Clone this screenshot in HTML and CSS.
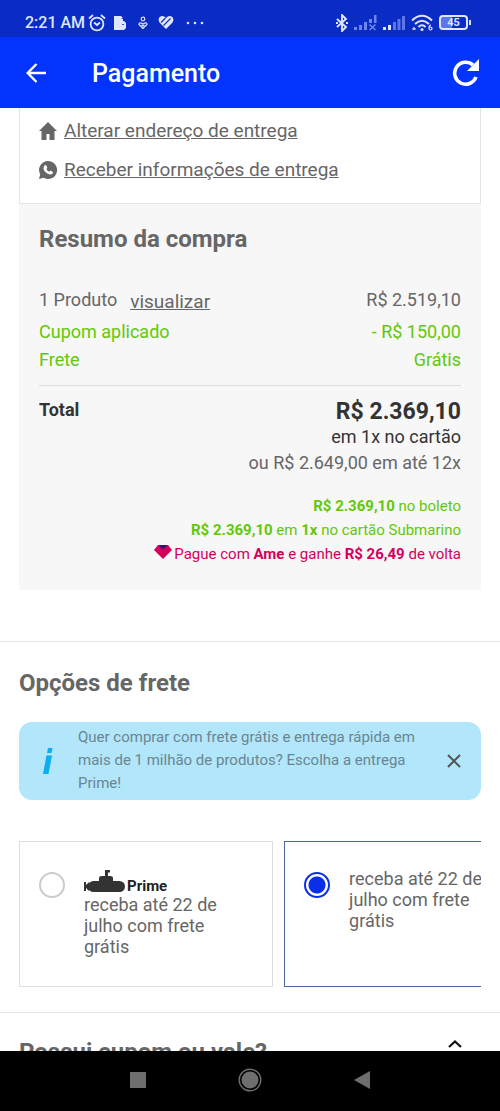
FILE: index.html
```html
<!DOCTYPE html>
<html lang="pt-BR">
<head>
<meta charset="utf-8">
<meta name="viewport" content="width=device-width, initial-scale=1">
<title>Pagamento</title>
<link rel="stylesheet" href="styles.css">
</head>
<body>
<div class="status-bar">
  <div class="status-group status-left">
    <span class="clock">2:21 AM</span>
    <svg width="18" height="18" viewBox="0 0 18 18" fill="none" stroke="currentColor" stroke-width="1.8"><circle cx="9" cy="10" r="6.4"/><path d="M6 8.5l3 2.5 3-2.5M1 4.5L5 1M17 4.5L13 1"/></svg>
    <svg class="icon-file" width="12" height="15" viewBox="0 0 12 15" fill="currentColor"><path d="M0 1h7l2 2v3h1l2 2v5l-2 2H0z"/><path d="M7.500 3.500H9M8 9.500h2" stroke="#0a2cc4" stroke-width=".8"/></svg>
    <svg class="icon-care" width="10" height="14" viewBox="0 0 10 14" fill="none" stroke="currentColor" stroke-width="1.2"><circle cx="5" cy="3" r="1.800"/><path d="M5 12.500L1 8.500q0-3 4-.5 4-2.500 4 .5zM3.500 9L5 10l1.500-1"/></svg>
    <svg class="icon-heart" width="16" height="15" viewBox="0 0 16 15"><path d="M8 14L1.500 7.500Q-.5 4 2 1.800 5-.3 8 3q3-3.300 6-1.200 2.500 2.200.5 5.700z" fill="currentColor"/><path d="M3 7.500L7.500 3M5.500 10.500l7-7" stroke="#0a2cc4" stroke-width="1.100"/></svg>
    <svg width="18" height="4" viewBox="0 0 18 4" fill="currentColor"><circle cx="2" cy="2" r="1.300"/><circle cx="9" cy="2" r="1.300"/><circle cx="16" cy="2" r="1.300"/></svg>
  </div>
  <div class="status-group">
    <svg width="12" height="18" viewBox="0 0 12 18" fill="none" stroke="currentColor" stroke-width="1.900"><path d="M1 5l9 8-4 4V1l4 4-9 8M0 9h2M10 9h2"/></svg>
    <svg width="23" height="16" viewBox="0 0 23 16"><g fill="#6d85ec"><path d="M0 12h3v3H0zM5 10h3v5H5zM10 7h3v8h-3zM15 4h3v4h-3zM20 0h2.500v8H20z"/></g><path d="M15.500 9.500l6 5.500M21.500 9.500l-6 5.500" stroke="#6d85ec" stroke-width="1.600"/></svg>
    <svg width="22" height="16" viewBox="0 0 22 16"><path d="M0 12h3v3H0zM5 10h3v5H5z" fill="currentColor"/><path d="M10 7h3v8h-3zM14.500 4h3v11h-3zM19 1h3v14h-3z" fill="#5c77ea"/></svg>
    <svg width="22" height="18" viewBox="0 0 22 18" fill="none" stroke="currentColor" stroke-width="2"><path d="M1 6.500Q11-3 21 6.500M4 10q7-6.500 14 0M7.500 13q3.500-3.500 7 0"/><circle cx="11" cy="15.500" r="1.500" fill="currentColor" stroke="none"/><path d="M1 15h4M3 13v3" stroke-width="1.200"/><circle cx="19.500" cy="14.500" r="1.500" stroke-width="1.200"/><path d="M18 14q0-3 2-3" stroke-width="1.200"/></svg>
    <span class="battery">45</span>
  </div>
</div>
<header class="app-bar">
  <button class="icon-button" aria-label="Voltar"><svg width="20" height="20" viewBox="0 0 20 20" fill="none" stroke="currentColor" stroke-width="2.400"><path d="M20 10H2M10.500 1L1.700 10l8.800 9"/></svg></button>
  <h1 class="app-title">Pagamento</h1>
  <button class="icon-button" aria-label="Recarregar"><svg width="28" height="28" viewBox="0 0 28 28"><path d="M22 6A11 11 0 1 0 25 18" fill="none" stroke="currentColor" stroke-width="3.600"/><path d="M28 0v12H16z" fill="currentColor"/></svg></button>
</header>

<main class="content">
  <section class="address">
    <a class="address-link" href="#"><svg width="18" height="18" viewBox="0 0 18 18" fill="currentColor"><path d="M9 0l9 9h-2.500v9h-5v-6h-3v6h-5V9H0l3-3z"/></svg><span class="link-text">Alterar endereço de entrega</span></a>
    <a class="address-link" href="#"><svg width="18" height="18" viewBox="0 0 18 18"><path d="M9 0a9 9 0 1 1-4.400 16.800L0 18l1.200-4.600A9 9 0 0 1 9 0z" fill="currentColor"/><path d="M5.700 4.200l1.400-.2 1.200 2.800-.9 1.300q1 1.900 2.800 2.700l1.200-1.200 2.600 1.300q.1 2.200-2.100 2.600Q8.500 13.400 6 10.700 3.200 7.200 5.700 4.200z" fill="#fff"/></svg><span class="link-text">Receber informações de entrega</span></a>
  </section>

  <section class="summary">
    <h2 class="section-title summary-title">Resumo da compra</h2>
    <div class="line line-product"><span class="product">1 Produto <a class="view-link" href="#">visualizar</a></span><span>R$ 2.519,10</span></div>
    <div class="line positive"><span>Cupom aplicado</span><span>- R$ 150,00</span></div>
    <div class="line positive"><span>Frete</span><span>Grátis</span></div>
    <div class="total">
      <strong class="total-label">Total</strong>
      <div class="total-values">
        <strong class="price">R$ 2.369,10</strong>
        <span class="price-note">em 1x no cartão</span>
        <span class="price-alt">ou R$ 2.649,00 em até 12x</span>
      </div>
    </div>
    <ul class="offers">
      <li><b>R$ 2.369,10</b> no boleto</li>
      <li><b>R$ 2.369,10</b> em <b>1x</b> no cartão Submarino</li>
      <li class="ame"><svg class="gem" width="18" height="14" viewBox="0 0 18 14"><path d="M4 0h10l4 5-9 9-9-9z" fill="#d4005c"/><path d="M5 0h8l-1.500 2.500L9 4 6.500 2.500z" fill="#2c1a72"/></svg>Pague com <b>Ame</b> e ganhe <b>R$ 26,49</b> de volta</li>
    </ul>
  </section>

  <section class="panel shipping">
    <h2 class="section-title">Opções de frete</h2>
    <div class="notice">
      <svg class="info-icon" width="10" height="26" viewBox="0 0 10 26" fill="#0aaef2"><path d="M5 0h4.500l-1 5H4zM3.500 7.500H9L5.500 26H0z"/></svg>
      <p class="notice-text">Quer comprar com frete grátis e entrega rápida em mais de 1 milhão de produtos? Escolha a entrega Prime!</p>
      <button class="notice-close" aria-label="Fechar"><svg width="14" height="14" viewBox="0 0 14 14" stroke="currentColor" stroke-width="2"><path d="M1 1l12 12M13 1L1 13"/></svg></button>
    </div>
    <div class="options">
      <label class="option"><input class="option-radio" type="radio" name="frete"><span class="option-body">
        <span class="prime"><svg width="41" height="22" viewBox="0 0 41 22" fill="#333"><rect x="4" y="11" width="37" height="11" rx="5.500"/><path d="M0 12h2v3l3-3v9l-3-3v3H0zM15 12V8q0-2 3-2h8q3 0 3 2v4z"/><path d="M21 7V0h5v2.500h-2V7z"/></svg><b>Prime</b></span>
        <span>receba até 22 de julho com frete grátis</span></span></label>
      <label class="option option-selected"><input class="option-radio" type="radio" name="frete" checked><span class="option-body">receba até 22 de julho com frete grátis</span></label>
    </div>
  </section>

  <section class="panel coupon">
    <h2 class="section-title">Possui cupom ou vale?</h2>
    <button class="expand" aria-label="Expandir"><svg width="14" height="8" viewBox="0 0 14 8" fill="none" stroke="currentColor" stroke-width="2.200"><path d="M1 7l6-5.500L13 7"/></svg></button>
  </section>
</main>

<nav class="system-nav">
  <button class="nav-button" aria-label="Recentes"><svg width="16" height="16" viewBox="0 0 16 16" fill="currentColor"><path d="M0 0h16v16H0z"/></svg></button>
  <button class="nav-button" aria-label="Início"><svg width="24" height="24" viewBox="0 0 24 24"><circle cx="12" cy="12" r="10.800" fill="none" stroke="currentColor" stroke-width="1.400"/><circle cx="12" cy="12" r="8.500" fill="currentColor"/></svg></button>
  <button class="nav-button" aria-label="Voltar"><svg width="16" height="18" viewBox="0 0 16 18" fill="currentColor"><path d="M16 0v18L0 9z"/></svg></button>
</nav>
</body>
</html>
```
FILE: styles.css
```css
* { box-sizing: border-box; }
body {
  margin: 0;
  height: 100vh;
  display: flex;
  flex-direction: column;
  background: #fff;
  color: #666;
  font: 18px/21px Roboto, "Liberation Sans", sans-serif;
}
h1, h2, p, ul { margin: 0; padding: 0; }
ul { list-style: none; }
a { color: inherit; }
button {
  display: flex;
  padding: 0;
  border: 0;
  background: none;
  color: inherit;
}
svg { display: block; flex: none; }

.status-bar {
  flex: none;
  display: flex;
  justify-content: space-between;
  align-items: center;
  height: 37px;
  padding: 8px 29px 0 25px;
  background: #0a2cc4;
  color: #dfe6ff;
}
.status-group { display: flex; align-items: center; gap: 6px; }
.status-left { gap: 3px; }
.clock { font-size: 16px; font-weight: 500; }
.icon-file { margin-left: 5px; }
.icon-care { margin-left: 9px; }
.icon-heart { margin: 0 9px 0 7px; }
.battery {
  position: relative;
  width: 29px;
  height: 15px;
  margin-right: 3px;
  border: 2px solid currentColor;
  border-radius: 4px;
  background: linear-gradient(90deg, #5c77ea 45%, transparent 45%);
  font-size: 11px;
  font-weight: 700;
  line-height: 12px;
  text-align: center;
}
.battery::after {
  content: "";
  position: absolute;
  top: 3px;
  right: -5px;
  width: 2px;
  height: 5px;
  background: currentColor;
}

.app-bar {
  flex: none;
  display: flex;
  align-items: center;
  height: 71px;
  padding: 0 21px 0 26px;
  background: #0234fe;
  color: #fff;
}
.app-title { flex: 1; margin-left: 46px; padding-top: 3px; font-size: 25px; font-weight: 500; line-height: 30px; }

.content { flex: 1; min-height: 0; overflow: hidden; }
.address {
  margin: 0 19px;
  padding: 3px 19px 14px;
  border: 1px solid #e4e4e4;
  border-top: 0;
}
.address-link {
  display: flex;
  align-items: center;
  gap: 7px;
  height: 39px;
  font-size: 19px;
  text-decoration: none;
}
.link-text { text-decoration: underline; }

.section-title { font-size: 24px; font-weight: 700; line-height: 30px; }
.summary { margin: 0 19px; padding: 20px 20px 24px; background: #f7f7f7; }
.summary-title { margin-bottom: 32px; }
.line { display: flex; justify-content: space-between; line-height: 28px; }
.line-product { margin-bottom: 4px; }
.product { display: flex; gap: 13px; }
.view-link { font-size: 19px; line-height: 32px; height: 28px; }
.positive, .offers { color: #62c80a; }
.total {
  display: flex;
  justify-content: space-between;
  margin-top: 11px;
  padding-top: 11px;
  border-top: 1px solid #ddd;
  color: #333;
}
.total-label { line-height: 26px; }
.total-values { display: flex; flex-direction: column; text-align: right; }
.price { font-size: 23px; line-height: 30px; }
.price-note { line-height: 20px; }
.price-alt { color: #666; line-height: 32px; }
.offers { margin-top: 15px; font-size: 15px; line-height: 24px; text-align: right; }
.ame { color: #d4005c; }
.gem { display: inline-block; margin-right: 2px; }

.panel { border-top: 1px solid #e4e4e4; padding: 26px 19px; }
.shipping { margin-top: 51px; padding-bottom: 25px; }
.notice {
  display: flex;
  align-items: center;
  margin: 24px 0 41px;
  padding: 4px 20px 5px 24px;
  border-radius: 13px;
  background: #b1e6fb;
}
.notice-text { flex: 1; margin: 0 24px 0 25px; font-size: 15px; line-height: 23px; color: #6c8591; }
.notice-close { color: #555; }

.options { display: flex; gap: 11px; overflow: hidden; }
.option {
  flex: none;
  display: flex;
  gap: 19px;
  width: 55%;
  min-height: 146px;
  padding: 26px 40px 26px 19px;
  border: 1px solid #ddd;
}
.option-selected { border-color: #456a9b; }
.option-radio {
  appearance: none;
  flex: none;
  width: 26px;
  height: 26px;
  margin: 4px 0 0;
  border: 2px solid #ccc;
  border-radius: 50%;
}
.option-radio:checked {
  border-color: #0a2fe8;
  background: radial-gradient(circle, #0a2fe8 8px, #fff 9px);
}
.prime {
  display: flex;
  align-items: flex-end;
  gap: 2px;
  height: 26px;
  padding-bottom: 2px;
  color: #222;
  font-size: 15px;
  line-height: 12px;
}

.coupon { display: flex; justify-content: space-between; padding-top: 24px; }
.expand { margin: 3px 19px 0 0; color: #111; }

.system-nav {
  flex: none;
  display: flex;
  justify-content: center;
  align-items: center;
  gap: 92px;
  height: 60px;
  padding-bottom: 2px;
  background: #000;
  color: #6e6e6e;
}
```
